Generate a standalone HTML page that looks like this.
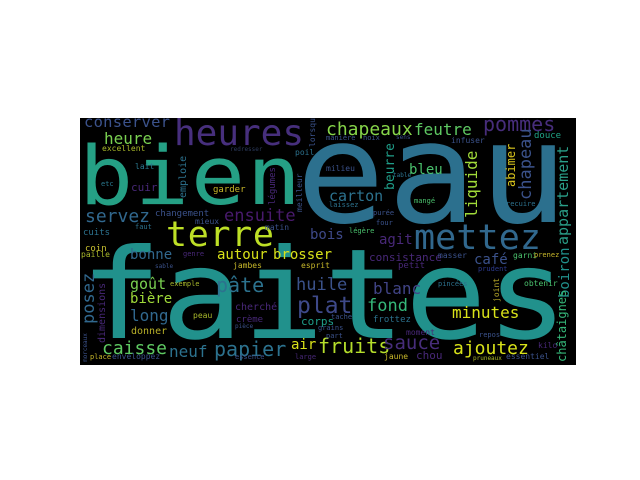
<!DOCTYPE html>
<html><head><meta charset="utf-8"><style>
html,body{margin:0;padding:0;background:#fff;width:640px;height:480px;overflow:hidden}
svg{position:absolute;left:0;top:0}
text{font-family:"DejaVu Sans Mono","Liberation Mono",monospace}
</style></head><body>
<svg width="640" height="480" viewBox="0 0 640 480" xmlns="http://www.w3.org/2000/svg">
<rect x="80" y="118" width="496" height="247" fill="#000"/>
<g>
<text transform="translate(80,338) scale(1,0.92)" x="0" y="0" font-size="136" fill="#21918c" textLength="488">faites</text>
<text transform="translate(296,222) scale(1,0.95)" x="0" y="0" font-size="148" fill="#2c708e" textLength="272">eau</text>
<text transform="translate(79,204) scale(1,0.9)" x="0" y="0" font-size="90" fill="#25a085" textLength="222">bien</text>
<text x="174" y="145" font-size="36" fill="#472f7d" textLength="130">heures</text>
<text x="166" y="246" font-size="35" fill="#bddf26" textLength="108">terre</text>
<text x="414" y="249" font-size="35" fill="#31688e" textLength="127">mettez</text>
<text x="84" y="127" font-size="15.5" fill="#3b528b" textLength="86">conserver</text>
<text x="104" y="144" font-size="16" fill="#7ad151">heure</text>
<text x="102" y="151" font-size="8" fill="#a8b82a">excellent</text>
<text x="85" y="222" font-size="18" fill="#31688e">servez</text>
<text x="155" y="216" font-size="9" fill="#3b528b">changement</text>
<text x="224" y="221" font-size="17" fill="#481a6c">ensuite</text>
<text x="135" y="169" font-size="8" fill="#2a788e">lait</text>
<text x="101" y="186" font-size="7" fill="#2a788e">etc</text>
<text x="131" y="191" font-size="11" fill="#482878">cuir</text>
<text x="213" y="192" font-size="9" fill="#c8b82a">garder</text>
<text x="195" y="224" font-size="8" fill="#3b528b">mieux</text>
<text x="135" y="229" font-size="7" fill="#2c728e">faut</text>
<text x="83" y="235" font-size="9" fill="#2c728e">cuits</text>
<text x="265" y="230" font-size="8" fill="#3b528b">matin</text>
<text x="295" y="155" font-size="8" fill="#2c728e">poil</text>
<text x="230" y="151" font-size="6" fill="#2c3a5c">redresser</text>
<text x="310" y="239" font-size="14" fill="#3e4989">bois</text>
<text x="326" y="135" font-size="18" fill="#86d549">chapeaux</text>
<text x="414" y="135" font-size="16" fill="#5ec962">feutre</text>
<text x="483" y="131" font-size="20" fill="#472d7b">pommes</text>
<text x="326" y="140" font-size="7" fill="#3b528b">manière</text>
<text x="363" y="140" font-size="7" fill="#3b528b">noix</text>
<text x="396" y="139" font-size="6" fill="#3b528b">sens</text>
<text x="451" y="143" font-size="8" fill="#3b528b">infuser</text>
<text x="534" y="138" font-size="9" fill="#20a486">douce</text>
<text x="409" y="174" font-size="14" fill="#4ac16d">bleu</text>
<text x="393" y="177" font-size="6" fill="#2c728e">table</text>
<text x="326" y="171" font-size="8" fill="#3b528b">milieu</text>
<text x="329" y="201" font-size="15" fill="#2c728e">carton</text>
<text x="329" y="207" font-size="7" fill="#2c728e">laissez</text>
<text x="414" y="203" font-size="7" fill="#4ac16d">mangé</text>
<text x="506" y="206" font-size="7" fill="#2c728e">recuire</text>
<text x="373" y="215" font-size="7" fill="#3b528b">purée</text>
<text x="376" y="225" font-size="7" fill="#3b528b">four</text>
<text x="349" y="233" font-size="7" fill="#4ac16d">légère</text>
<text x="379" y="244" font-size="14" fill="#482878">agit</text>
<g font-size="12">
<text transform="translate(186,198) rotate(-90)" font-size="10" fill="#2c728e">emploie</text>
<text transform="translate(275,205) rotate(-90)" font-size="9" fill="#482878">légumes</text>
<text transform="translate(302,212) rotate(-90)" font-size="8" fill="#3b528b">meilleur</text>
<text transform="translate(315,147) rotate(-90)" font-size="8" fill="#3b528b">lorsqu</text>
<text transform="translate(394,190) rotate(-90)" font-size="13" fill="#1f9e89">beurre</text>
<text transform="translate(477,218) rotate(-90)" font-size="16" fill="#a0da39">liquide</text>
<text transform="translate(515,187) rotate(-90)" font-size="12" fill="#d8c41c">abimer</text>
<text transform="translate(531,200) rotate(-90)" font-size="17" fill="#3b528b">chapeau</text>
<text transform="translate(568,245) rotate(-90)" font-size="15" fill="#2a9e88">appartement</text>
<text transform="translate(569,298) rotate(-90)" font-size="14" fill="#21918c">boiron</text>
<text transform="translate(566,362) rotate(-90)" font-size="12" fill="#35b779">châtaignes</text>
<text transform="translate(94,324) rotate(-90)" font-size="17" fill="#31688e">posez</text>
<text transform="translate(105,343) rotate(-90)" font-size="10" fill="#482878">dimensions</text>
<text transform="translate(87,362) rotate(-90)" font-size="6" fill="#3b528b">morceaux</text>
<text transform="translate(499,302) rotate(-90)" font-size="8" fill="#b8a82a">joint</text>
</g>
<text x="85" y="251" font-size="9" fill="#c8c030">coin</text>
<text x="81" y="257" font-size="8" fill="#a8b82a">paille</text>
<text x="130" y="259" font-size="14" fill="#31688e">bonne</text>
<text x="183" y="256" font-size="7" fill="#482878">genre</text>
<text x="217" y="259" font-size="14" fill="#d8e219">autour</text>
<text x="273" y="259" font-size="14" fill="#d8e219">brosser</text>
<text x="155" y="268" font-size="6" fill="#3b528b">sable</text>
<text x="233" y="268" font-size="8" fill="#c8b82a">jambes</text>
<text x="301" y="268" font-size="8" fill="#c8b82a">esprit</text>
<text x="130" y="289" font-size="15" fill="#7ad151">goût</text>
<text x="170" y="286" font-size="7" fill="#a8b82a">exemple</text>
<text x="216" y="292" font-size="20" fill="#2c728e">pâte</text>
<text x="296" y="290" font-size="17" fill="#3b528b">huile</text>
<text x="130" y="303" font-size="14" fill="#a0da39">bière</text>
<text x="297" y="313" font-size="23" fill="#3e4989">plat</text>
<text x="235" y="310" font-size="10" fill="#482878">cherché</text>
<text x="130" y="321" font-size="16" fill="#31688e">long</text>
<text x="193" y="318" font-size="8" fill="#a8b82a">peau</text>
<text x="236" y="322" font-size="9" fill="#482878">crème</text>
<text x="301" y="325" font-size="11" fill="#1f9e89">corps</text>
<text x="131" y="334" font-size="10" fill="#b8b028">donner</text>
<text x="235" y="328" font-size="6" fill="#3b528b">pièce</text>
<text x="102" y="354" font-size="18" fill="#5ec962">caisse</text>
<text x="169" y="357" font-size="16" fill="#2c728e">neuf</text>
<text x="214" y="356" font-size="20" fill="#2c728e">papier</text>
<text x="291" y="349" font-size="14" fill="#d8e219">air</text>
<text x="318" y="353" font-size="20" fill="#b5de2b">fruits</text>
<text x="90" y="359" font-size="7" fill="#c8b82a">place</text>
<text x="112" y="359" font-size="8" fill="#3b528b">enveloppez</text>
<text x="235" y="359" font-size="7" fill="#3b528b">essence</text>
<text x="295" y="359" font-size="7" fill="#482878">large</text>
<text x="318" y="330" font-size="7" fill="#3b528b">grains</text>
<text x="326" y="338" font-size="7" fill="#3b528b">part</text>
<text x="369" y="261" font-size="11" fill="#482878">consistance</text>
<text x="438" y="258" font-size="8" fill="#3b528b">masser</text>
<text x="474" y="264" font-size="14" fill="#3b528b">café</text>
<text x="513" y="258" font-size="8" fill="#4ac16d">garni</text>
<text x="534" y="257" font-size="7" fill="#c8b82a">prenez</text>
<text x="398" y="268" font-size="9" fill="#482878">petit</text>
<text x="478" y="271" font-size="7" fill="#2c3a8c">prudent</text>
<text x="373" y="294" font-size="16" fill="#414487">blanc</text>
<text x="438" y="286" font-size="7" fill="#2c728e">pincées</text>
<text x="524" y="286" font-size="8" fill="#4ac16d">obtenir</text>
<text x="367" y="311" font-size="17" fill="#35b779">fond</text>
<text x="452" y="318" font-size="16" fill="#d8e219">minutes</text>
<text x="373" y="322" font-size="9" fill="#2c728e">frottez</text>
<text x="331" y="319" font-size="7" fill="#3b528b">tache</text>
<text x="406" y="335" font-size="8" fill="#482878">moment</text>
<text x="479" y="337" font-size="7" fill="#3b528b">repos</text>
<text x="383" y="349" font-size="19" fill="#472d7b">sauce</text>
<text x="453" y="354" font-size="18" fill="#d8e219">ajoutez</text>
<text x="538" y="348" font-size="8" fill="#482878">kilo</text>
<text x="416" y="359" font-size="11" fill="#482878">chou</text>
<text x="384" y="359" font-size="8" fill="#c8b82a">jaune</text>
<text x="473" y="360" font-size="6" fill="#a8b82a">pruneaux</text>
<text x="506" y="359" font-size="8" fill="#3b528b">essentiel</text>
</g>
</svg>
</body></html>
